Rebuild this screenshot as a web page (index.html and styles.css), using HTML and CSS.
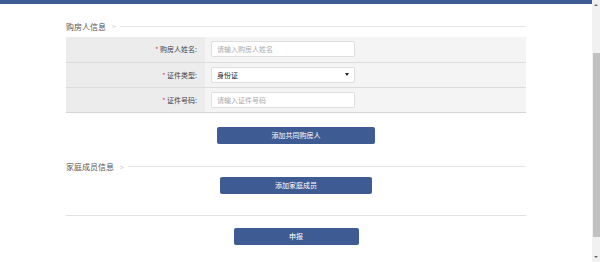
FILE: index.html
```html
<!DOCTYPE html>
<html>
<head>
    <title>申报</title>
    <link rel="stylesheet" href="styles.css">
</head>
<body>
    <div class="page">
        <div class="topbar"></div>
        <div class="content">
            <div class="sec-title">
                <span>购房人信息</span>
                <i class="chev">&gt;</i>
                <b class="sec-line"></b>
            </div>
            <table class="frm">
                <tr>
                    <th><em>*</em> 购房人姓名:</th>
                    <td><input type="text" class="ipt" placeholder="请输入购房人姓名" /></td>
                </tr>
                <tr>
                    <th><em>*</em> 证件类型:</th>
                    <td>
                        <div class="ipt sel">
                            <span>身份证</span>
                            <i class="caret"></i>
                        </div>
                    </td>
                </tr>
                <tr>
                    <th><em>*</em> 证件号码:</th>
                    <td><input type="text" class="ipt" placeholder="请输入证件号码" /></td>
                </tr>
            </table>
            <div class="btnrow row1">
                <a class="bluebtn w158">添加共同购房人</a>
            </div>
            <div class="sec-title sec2">
                <span>家庭成员信息</span>
                <i class="chev">&gt;</i>
                <b class="sec-line"></b>
            </div>
            <div class="btnrow row2">
                <a class="bluebtn w152">添加家庭成员</a>
            </div>
            <div class="hr"></div>
            <div class="btnrow row3">
                <a class="bluebtn w125">申报</a>
            </div>
        </div>
    </div>
    <div class="scrollbar">
        <i class="arr up"></i>
        <div class="thumb"></div>
        <i class="arr down"></i>
    </div>
</body>
</html>
```

FILE: styles.css
```css
html, body {
    margin: 0;
    height: 100%;
    overflow: hidden;
}

body {
    display: flex;
    font-family: "Noto Sans CJK SC", "Liberation Sans", sans-serif;
    background: #fff;
}

.page {
    flex: 1;
}

.topbar {
    height: 4px;
    background-color: #3f5b93;
}

.content {
    width: 460px;
    margin-left: 66px;
}

.sec-title {
    display: flex;
    align-items: center;
    height: 14px;
    margin-top: 15px;
    font-size: 8px;
    color: #555;
}

.chev {
    font-style: normal;
    font-size: 7px;
    color: #ccc;
    margin: 0 4px 0 6px;
}

.sec-line {
    flex: 1;
    height: 1px;
    background: #e6e6e6;
}

.frm {
    width: 100%;
    margin-top: 4px;
    border-collapse: collapse;
}

.frm tr {
    height: 25px;
    border-bottom: 1px solid #dcdcdc;
}

.frm tr:last-child {
    border-bottom: 1px solid #d4d4d4;
}

.frm th {
    width: 131px;
    padding: 0 8px 0 0;
    text-align: right;
    font-weight: normal;
    font-size: 7px;
    color: #444;
    background: #ececec;
}

.frm th em {
    font-style: normal;
    color: #e4393c;
}

.frm td {
    padding: 0 0 0 6px;
    background: #f4f4f4;
}

.ipt {
    display: block;
    box-sizing: border-box;
    width: 144px;
    height: 16px;
    padding: 0 5px;
    margin: 0;
    border: 1px solid #dedede;
    border-radius: 2px;
    background: #fff;
    font-family: inherit;
    font-size: 7px;
    color: #333;
    outline: none;
}

.ipt::placeholder {
    color: #aaa;
}

.sel {
    display: flex;
    align-items: center;
    justify-content: space-between;
    font-size: 7px;
    color: #222;
}

.caret {
    width: 0;
    height: 0;
    border-left: 2px solid transparent;
    border-right: 2px solid transparent;
    border-top: 3px solid #222;
}

.btnrow {
    display: flex;
    justify-content: center;
}

.row1 {
    margin-top: 14px;
}

.row2 {
    margin-top: 3px;
}

.row3 {
    margin-top: 12px;
}

.sec2 {
    margin-top: 16px;
}

.bluebtn {
    display: flex;
    align-items: center;
    justify-content: center;
    height: 17px;
    border-radius: 2px;
    background-color: #3f5b93;
    color: #fff;
    font-size: 7px;
}

.w158 { width: 158px; }
.w152 { width: 152px; }
.w125 { width: 125px; }

.hr {
    height: 1px;
    margin-top: 21px;
    background: #e3e3e3;
}

.scrollbar {
    width: 8px;
    display: flex;
    flex-direction: column;
    align-items: center;
    background: #f1f1f1;
}

.arr {
    width: 0;
    height: 0;
    margin: 4px 0;
    border-left: 2px solid transparent;
    border-right: 2px solid transparent;
}

.arr.up {
    border-bottom: 2px solid #666;
}

.arr.down {
    border-top: 2px solid #666;
}

.thumb {
    width: 7px;
    margin-top: 43px;
    height: 184px;
    background: #c1c1c1;
}

.down {
    margin-top: auto;
}
```
